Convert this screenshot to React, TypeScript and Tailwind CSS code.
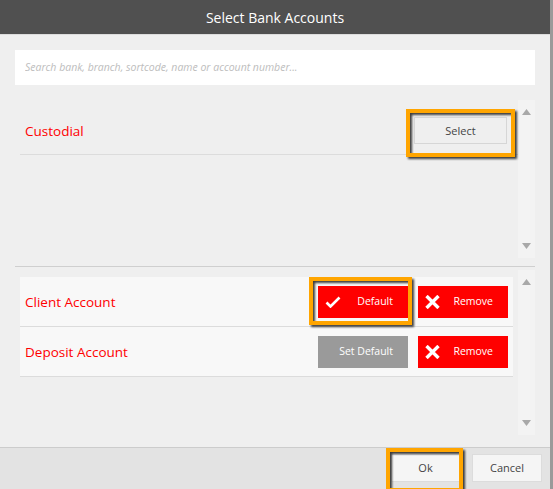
import { ReactNode } from "react";

const font = { fontFamily: '"Open Sans", "Liberation Sans", sans-serif' };

// Small triangle used by the fake scrollbars
const Arrow = ({ up }: { up?: boolean }) => (
  <svg width="9" height="6" viewBox="0 0 9 6" className="block">
    <polygon points={up ? "4.5,0 9,6 0,6" : "0,0 9,0 4.5,6"} fill="#a8a8a8" />
  </svg>
);

// Orange annotation box drawn around a button
const Highlight = ({ className }: { className: string }) => (
  <div
    className={`pointer-events-none absolute border-[4px] border-[#ffa500] drop-shadow-[2px_2px_1px_rgba(0,0,0,0.75)] ${className}`}
  />
);

const CheckIcon = () => (
  <svg width="16" height="12" viewBox="0 0 16 12" fill="none">
    <path d="M1.5 6.5 L5.5 10.5 L14.5 1.5" stroke="white" strokeWidth="2.6" />
  </svg>
);

const CrossIcon = () => (
  <svg width="15" height="14" viewBox="0 0 15 14" fill="none">
    <path d="M1.5 1 L13.5 13 M13.5 1 L1.5 13" stroke="white" strokeWidth="3.4" />
  </svg>
);

const RedButton = ({ icon, label }: { icon: ReactNode; label: string }) => (
  <button className="flex h-[32px] w-[90px] items-center justify-between bg-[#ff0000] pl-[7px] pr-[15px] text-[10.5px] text-white">
    {icon}
    <span>{label}</span>
  </button>
);

const ScrollTrack = () => (
  <div className="flex w-[17px] flex-col items-center justify-between bg-[#f3f3f3] py-[9px]">
    <Arrow up />
    <Arrow />
  </div>
);

export default function App() {
  return (
    <div className="flex h-[489px] w-[553px] overflow-hidden" style={font}>
      <div className="flex w-[550px] flex-col bg-[#efefef]">
        {/* Title bar */}
        <div className="flex h-[35px] items-center justify-center border-b border-[#dcdcdc] bg-[#505050] text-[14px] text-white">
          Select Bank Accounts
        </div>

        {/* Search */}
        <div className="mx-[15px] mt-[15px] flex h-[35px] items-center bg-white px-[10px]">
          <input
            className="w-full bg-transparent text-[10.5px] italic outline-none placeholder:text-[#bdbdbd]"
            placeholder="Search bank, branch, sortcode, name or account number..."
          />
        </div>

        {/* Available accounts */}
        <div className="mt-[15px] ml-[20px] mr-[15px] flex h-[158px]">
          <div className="flex-1 pt-[7px]">
            <div className="flex h-[48px] items-center justify-between border-b border-[#dcdcdc] pl-[5px] pr-[11px]">
              <span className="pt-[2px] text-[13.5px] text-[#ff0000]">Custodial</span>
              <div className="relative">
                <button className="h-[27px] w-[93px] border border-[#d6d6d6] bg-[#efefef] text-[11px] text-[#444]">
                  Select
                </button>
                <Highlight className="-left-[8px] -right-[8px] -top-[8px] -bottom-[13px]" />
              </div>
            </div>
          </div>
          <ScrollTrack />
        </div>

        <div className="mx-[15px] mt-[8px] h-px bg-[#cfcfcf]" />

        {/* Selected accounts */}
        <div className="ml-[20px] mr-[15px] mt-[3px] flex h-[165px]">
          <div className="flex-1 pt-[7px] pr-[5px]">
            <div className="bg-[#f8f8f8]">
              <div className="flex h-[50px] items-center justify-between border-b border-[#dcdcdc] pl-[5px] pr-[5px]">
                <span className="pt-[1px] text-[13.5px] text-[#ff0000]">Client Account</span>
                <div className="flex gap-[10px]">
                  <div className="relative">
                    <RedButton icon={<CheckIcon />} label="Default" />
                    <Highlight className="-left-[9px] -right-[4px] -top-[9px] -bottom-[7px]" />
                  </div>
                  <RedButton icon={<CrossIcon />} label="Remove" />
                </div>
              </div>
              <div className="flex h-[50px] items-center justify-between border-b border-[#dcdcdc] pl-[5px] pr-[5px]">
                <span className="pt-[1px] text-[13.5px] text-[#ff0000]">Deposit Account</span>
                <div className="flex gap-[10px]">
                  <button className="flex h-[32px] w-[90px] items-center justify-end bg-[#9a9a9a] pr-[15px] text-[10.5px] text-white">
                    Set Default
                  </button>
                  <RedButton icon={<CrossIcon />} label="Remove" />
                </div>
              </div>
            </div>
          </div>
          <ScrollTrack />
        </div>

        {/* Footer */}
        <div className="mt-auto flex h-[42px] items-start justify-end gap-[12px] border-t border-[#cccccc] bg-[#e3e3e3] pr-[8px] pt-[6px]">
          <div className="relative">
            <button className="h-[28px] w-[69px] border border-[#dcdcdc] bg-[#f5f5f5] text-[11px] text-[#444]">
              Ok
            </button>
            <Highlight className="-left-[5px] -right-[3px] -top-[6px] -bottom-[10px]" />
          </div>
          <button className="h-[28px] w-[70px] border border-[#dcdcdc] bg-[#f5f5f5] text-[11px] text-[#444]">
            Cancel
          </button>
        </div>
      </div>
      <div className="w-[3px] bg-[#9a9a9a]" />
    </div>
  );
}
